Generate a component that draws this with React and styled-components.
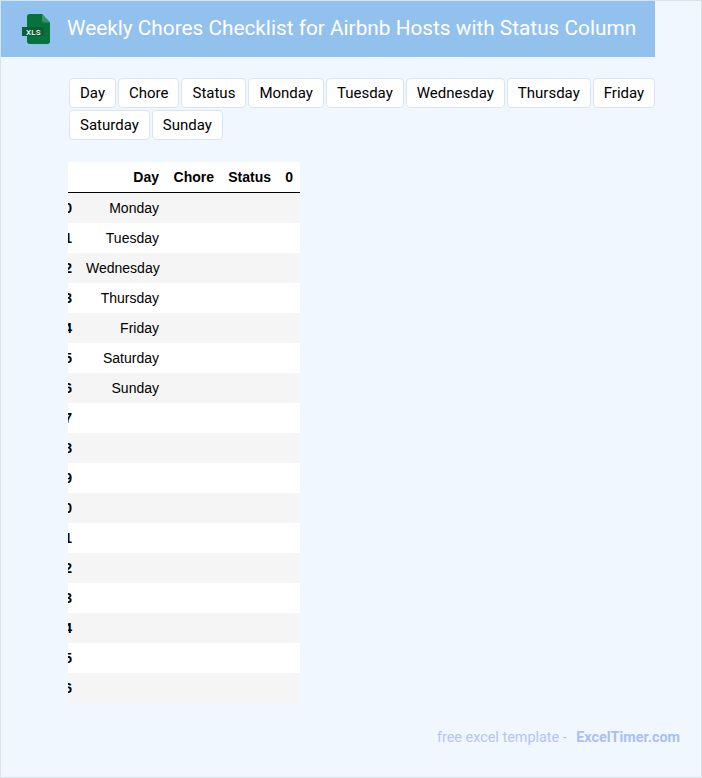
import styled, { createGlobalStyle } from "styled-components";

const GlobalStyle = createGlobalStyle`
  html, body {
    margin: 0;
    padding: 0;
    background: #f0f7ff;
  }
`;

const Page = styled.div`
  box-sizing: border-box;
  width: 702px;
  height: 778px;
  border: 1px solid #d9e3ef;
  background: #f0f7ff;
  font-family: Roboto, sans-serif;
  display: flex;
  flex-direction: column;
`;

const Header = styled.header`
  box-sizing: border-box;
  width: 654px;
  height: 56px;
  background: #93c1ee;
  display: flex;
  align-items: center;
  padding-left: 21px;
  gap: 17px;
`;

const Title = styled.h1`
  margin: 0 0 2px;
  font-size: 20.8px;
  font-weight: 400;
  color: #fff;
  white-space: nowrap;
`;

const Filters = styled.div`
  display: flex;
  flex-wrap: wrap;
  gap: 2px;
  width: 600px;
  margin: 21px 0 0 68px;
`;

const FilterButton = styled.button`
  box-sizing: border-box;
  height: 30px;
  padding: 0 10px;
  background: #fff;
  border: 1px solid #dbe5f1;
  border-radius: 4px;
  font-family: Roboto, sans-serif;
  font-size: 15px;
  color: #000;
`;

const TableClip = styled.div`
  width: 232px;
  margin: 22px 0 0 67px;
  overflow: hidden;
`;

const Table = styled.table`
  border-collapse: separate;
  border-spacing: 0;
  margin-left: -19px;
  width: 251px;
  background: #fff;
  font-family: "Liberation Sans", Arial, sans-serif;
  font-size: 14px;
  color: #000;
  table-layout: fixed;
`;

const HeadRow = styled.tr`
  height: 31px;
`;

const Row = styled.tr`
  height: 30px;
  background: ${(props) => (props.$striped ? "#f5f5f5" : "#fff")};
`;

const Th = styled.th`
  padding: 0 7px;
  text-align: right;
  font-weight: 700;
  width: ${(props) => props.$w}px;
  box-sizing: border-box;
`;

const HeadCell = styled(Th)`
  border-bottom: 1px solid #000;
`;

const Td = styled.td`
  padding: 0 7px;
  text-align: right;
  white-space: nowrap;
`;

const Footer = styled.footer`
  margin: 26px 21px 0 0;
  text-align: right;
  font-size: 14.4px;
  color: #b3c6f2;
`;

const FooterLink = styled.a`
  margin-left: 6px;
  font-weight: 700;
  color: #a9c0f3;
  text-decoration: none;
`;

const XlsIcon = () => (
  <svg width="28" height="30" viewBox="0 0 28 30">
    <path d="M5 2.500C5 1 6 0 7.500 0H20l8 8.500V27.500C28 29 27 30 25.500 30h-18C6 30 5 29 5 27.500z" fill="#06733c" />
    <path d="M20 0l8 8.500h-5.500C21 8.500 20 7.500 20 6z" fill="#3b9468" />
    <rect x="0" y="13" width="22" height="9" fill="#0b5f38" />
    <text x="11.500" y="20.500" textAnchor="middle" fontSize="8" fontWeight="500" fontFamily="Roboto, sans-serif" fill="#f2f8f4" letterSpacing=".2">XLS</text>
  </svg>
);

const columns = ["Day", "Chore", "Status", "Monday", "Tuesday", "Wednesday", "Thursday", "Friday", "Saturday", "Sunday"];
const days = ["Monday", "Tuesday", "Wednesday", "Thursday", "Friday", "Saturday", "Sunday"];
const rows = Array.from({ length: 17 }, (_, i) => days[i] || "");

const App = () => {
  return (
    <Page>
      <GlobalStyle />
      <Header>
        <XlsIcon />
        <Title>Weekly Chores Checklist for Airbnb Hosts with Status Column</Title>
      </Header>
      <Filters>
        {columns.map((c) => (
          <FilterButton key={c}>{c}</FilterButton>
        ))}
      </Filters>
      <TableClip>
        <Table>
          <thead>
            <HeadRow>
              <HeadCell $w={30} />
              <HeadCell $w={87}>Day</HeadCell>
              <HeadCell $w={55}>Chore</HeadCell>
              <HeadCell $w={57}>Status</HeadCell>
              <HeadCell $w={22}>0</HeadCell>
            </HeadRow>
          </thead>
          <tbody>
            {rows.map((day, i) => (
              <Row key={i} $striped={i % 2 === 0}>
                <Th>{i}</Th>
                <Td>{day}</Td>
                <Td />
                <Td />
                <Td />
              </Row>
            ))}
          </tbody>
        </Table>
      </TableClip>
      <Footer>
        free excel template - <FooterLink>ExcelTimer.com</FooterLink>
      </Footer>
    </Page>
  );
};

export default App;
